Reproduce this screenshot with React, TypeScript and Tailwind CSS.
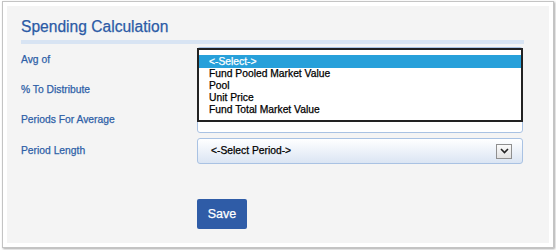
import React from "react";

const font = { fontFamily: '"Liberation Sans", Arial, sans-serif' };

export default function App() {
  return (
    <div className="w-[556px] h-[250px] bg-white pt-[1px] pl-[2px] [-webkit-text-stroke:0.25px_currentColor]" style={font}>
      <div className="w-[552px] h-[247px] bg-white border border-[#c4c4c4] shadow-[1px_1px_2px_rgba(0,0,0,0.35)] pt-[4px] pl-[4px]">
        <div className="w-[542px] h-[237px] bg-[#f4f4f4] pl-[14px] pt-[12px]">
          <div className="text-[15.6px] leading-[18px] text-[#2c5ba6]">Spending Calculation</div>
          <div className="mt-[4px] w-[503px] h-[4px] bg-[#d8e4f3]" />
          <div className="mt-[1px] flex flex-col">
            <div className="flex items-center h-[30px] relative">
              <div className="w-[176px] text-[10.3px] text-[#2e5fa7]">Avg of</div>
              <div className="w-[326px] h-[26px] rounded-[3px] border border-[#a9c2e3] bg-gradient-to-b from-white to-[#dce6f4]" />
              <div className="absolute left-[176px] top-[3px] w-[326px] h-[74px] border-2 border-[#222] bg-white pb-[4px] pt-[5px] text-[10.3px] text-black z-10">
                <div className="h-[13px] leading-[13px] bg-[#27a0da] text-white pl-[10px]">&lt;-Select-&gt;</div>
                <div className="h-[12px] leading-[12px] pl-[10px]">Fund Pooled Market Value</div>
                <div className="h-[12px] leading-[12px] pl-[10px]">Pool</div>
                <div className="h-[12px] leading-[12px] pl-[10px]">Unit Price</div>
                <div className="h-[12px] leading-[12px] pl-[10px]">Fund Total Market Value</div>
              </div>
            </div>
            <div className="flex items-center h-[30px]">
              <div className="w-[176px] text-[10.3px] text-[#2e5fa7]">% To Distribute</div>
              <div className="w-[326px] h-[26px] rounded-[3px] border border-[#a9c2e3] bg-white" />
            </div>
            <div className="flex items-center h-[30px]">
              <div className="w-[176px] text-[10.3px] text-[#2e5fa7]">Periods For Average</div>
              <div className="w-[326px] h-[26px] rounded-[3px] border border-[#a9c2e3] bg-white" />
            </div>
            <div className="flex items-center h-[30px] mt-[1px]">
              <div className="w-[176px] text-[10.3px] text-[#2e5fa7]">Period Length</div>
              <div className="w-[326px] h-[26px] rounded-[3px] border border-[#a9c2e3] bg-gradient-to-b from-white to-[#dbe5f3] flex items-center pl-[13px] pr-[10px]">
                <span className="flex-1 text-[10.3px] text-black">&lt;-Select Period-&gt;</span>
                <div className="w-[16px] h-[15px] border border-[#8f8f8f] bg-gradient-to-b from-[#fafafa] to-[#e2e2e2] flex items-center justify-center">
                  <svg width="9" height="6" viewBox="0 0 9 6">
                    <path d="M1 1 L4.5 4.5 L8 1" fill="none" stroke="#222" strokeWidth="1.6" />
                  </svg>
                </div>
              </div>
            </div>
            <div className="pl-[176px] mt-[33px]">
              <button className="w-[50px] h-[30px] rounded-[2px] bg-[#2f5ca7] text-white text-[12.5px]">Save</button>
            </div>
          </div>
        </div>
      </div>
    </div>
  );
}
